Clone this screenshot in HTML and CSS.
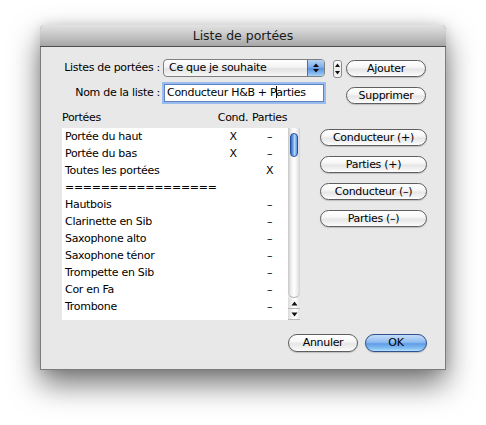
FILE: index.html
```html
<!DOCTYPE html>
<html lang="fr">
<head>
<meta charset="utf-8">
<title>Liste de portées</title>
<link rel="stylesheet" href="styles.css">
</head>
<body>
<div class="stage">
  <div class="window">
    <div class="titlebar">Liste de portées</div>
    <div class="top">
      <label class="lbl">Listes de portées :</label>
      <div class="popup">
        <span class="popup-text">Ce que je souhaite</span>
        <span class="popup-arrows">
          <svg width="8" height="12" viewBox="0 0 8 12"><polygon points="1,5 4,1.5 7,5" fill="#111"/><polygon points="1,7 4,10.5 7,7" fill="#111"/></svg>
        </span>
      </div>
      <div class="stepper">
        <svg width="7" height="16" viewBox="0 0 7 16"><polygon points="1,6 3.5,2.5 6,6" fill="#111"/><polygon points="1,10 3.5,13.5 6,10" fill="#111"/></svg>
      </div>
      <button class="btn btn-add">Ajouter</button>
      <label class="lbl">Nom de la liste :</label>
      <div class="field">Conducteur H&amp;B + P<span class="caret"></span>arties</div>
      <div class="spacer"></div>
      <button class="btn btn-del">Supprimer</button>
    </div>
    <div class="main">
      <div class="list-head"><span>Portées</span><span class="c">Cond.</span><span class="c">Parties</span></div>
      <div class="side-gap"></div>
      <div class="list-wrap">
        <div class="list">
          <div class="row"><span>Portée du haut</span><span class="c">X</span><span class="c">–</span></div>
          <div class="row"><span>Portée du bas</span><span class="c">X</span><span class="c">–</span></div>
          <div class="row"><span>Toutes les portées</span><span class="c"></span><span class="c">X</span></div>
          <div class="row"><span>=================</span><span class="c"></span><span class="c"></span></div>
          <div class="row"><span>Hautbois</span><span class="c"></span><span class="c">–</span></div>
          <div class="row"><span>Clarinette en Sib</span><span class="c"></span><span class="c">–</span></div>
          <div class="row"><span>Saxophone alto</span><span class="c"></span><span class="c">–</span></div>
          <div class="row"><span>Saxophone ténor</span><span class="c"></span><span class="c">–</span></div>
          <div class="row"><span>Trompette en Sib</span><span class="c"></span><span class="c">–</span></div>
          <div class="row"><span>Cor en Fa</span><span class="c"></span><span class="c">–</span></div>
          <div class="row"><span>Trombone</span><span class="c"></span><span class="c">–</span></div>
        </div>
        <div class="scrollbar">
          <div class="track"><div class="thumb"></div></div>
          <div class="arrow arrow-up"><svg width="7" height="5" viewBox="0 0 7 5"><polygon points="0.5,4.5 3.5,0.5 6.5,4.5" fill="#111"/></svg></div>
          <div class="arrow arrow-down"><svg width="7" height="5" viewBox="0 0 7 5"><polygon points="0.5,0.5 3.5,4.5 6.5,0.5" fill="#111"/></svg></div>
        </div>
      </div>
      <div class="side-buttons">
        <button class="btn btn-side">Conducteur (+)</button>
        <button class="btn btn-side">Parties (+)</button>
        <button class="btn btn-side">Conducteur (–)</button>
        <button class="btn btn-side">Parties (–)</button>
      </div>
    </div>
    <div class="footer">
      <button class="btn btn-cancel">Annuler</button>
      <button class="btn btn-ok">OK</button>
    </div>
  </div>
</div>
</body>
</html>
```

FILE: styles.css
```css
html, body {
  margin: 0;
  padding: 0;
  background: #ffffff;
}
body {
  font-family: "DejaVu Sans", sans-serif;
  font-size: 11px;
  letter-spacing: -0.3px;
  color: #000;
}
.stage {
  box-sizing: border-box;
  width: 486px;
  height: 425px;
  padding: 25px 0 0 40px;
  overflow: hidden;
}
.window {
  width: 406px;
  height: 345px;
  box-sizing: border-box;
  background: #e8e8e8;
  border: 1px solid #7c7c7c;
  border-top: none;
  border-radius: 5px 5px 0 0;
  box-shadow: 0 14px 30px rgba(0, 0, 0, 0.55), 0 0 12px rgba(0, 0, 0, 0.12);
  display: flex;
  flex-direction: column;
}
.titlebar {
  height: 21px;
  margin: 0 -1px;
  background: linear-gradient(#e2e2e2, #c6c6c6 50%, #a6a6a6);
  border-bottom: 1px solid #4e4e4e;
  border-radius: 5px 5px 0 0;
  text-align: center;
  line-height: 22px;
  font-size: 12.5px;
  letter-spacing: 0;
  color: #1a1a1a;
}
/* top form */
.top {
  margin-top: 12px;
  display: grid;
  grid-template-columns: 122px 162px 17px 84px;
  grid-template-rows: 18px 20px;
  row-gap: 7px;
}
.lbl {
  text-align: right;
  padding-right: 3px;
  line-height: 18px;
  white-space: nowrap;
}
.popup {
  display: flex;
  box-sizing: border-box;
  height: 18px;
  border: 1px solid #7f7f7f;
  border-radius: 4px;
  background: linear-gradient(#ffffff, #f3f3f3 45%, #e2e2e2 55%, #f6f6f6);
  overflow: hidden;
}
.popup-text {
  flex: 1;
  padding-left: 5px;
  line-height: 16px;
  white-space: nowrap;
}
.popup-arrows {
  width: 16px;
  display: flex;
  align-items: center;
  justify-content: center;
  border-left: 1px solid #4d6fa8;
  background: linear-gradient(#b7d3f5, #7eaee9 45%, #5b93e0 55%, #8fc2f4 90%, #aad7fb);
}
.stepper {
  justify-self: end;
  width: 9px;
  height: 18px;
  box-sizing: border-box;
  border: 1px solid #8a8a8a;
  border-radius: 3px;
  background: linear-gradient(#ffffff, #ececec 50%, #f7f7f7);
  display: flex;
  align-items: center;
  justify-content: center;
  margin-top: 1px;
}
.field {
  box-sizing: border-box;
  height: 18px;
  margin: 0 1px;
  border: 1px solid #5d82c2;
  box-shadow: 0 0 0 2px #9bbcee;
  background: #fff;
  padding-left: 2px;
  line-height: 16px;
  white-space: nowrap;
}
.caret {
  display: inline-block;
  width: 1px;
  height: 12px;
  margin: 0 -1px 0 0;
  background: #000;
  vertical-align: -2px;
}
/* buttons */
.btn {
  font: inherit;
  letter-spacing: inherit;
  color: #000;
  box-sizing: border-box;
  height: 17px;
  padding: 0;
  border: 1px solid #5e5e5e;
  border-radius: 9px;
  background: linear-gradient(#ffffff, #f7f7f7 40%, #e6e6e6 55%, #f4f4f4 85%, #ffffff);
  box-shadow: 0 1px 1px rgba(0, 0, 0, 0.18);
  line-height: 15px;
  text-align: center;
  white-space: nowrap;
}
.btn-add {
  justify-self: end;
  width: 80px;
  margin-top: 1px;
}
.btn-del {
  justify-self: end;
  align-self: start;
  width: 80px;
  margin-top: 3px;
}
/* main area */
.main {
  margin-top: 7px;
  padding-left: 21px;
  display: grid;
  grid-template-columns: 238px 107px;
  grid-template-rows: 14px auto;
  column-gap: 20px;
  row-gap: 3px;
}
.list-head {
  display: grid;
  grid-template-columns: 153px 36px 37px;
  line-height: 14px;
  white-space: nowrap;
}
.c {
  text-align: center;
}
.list-wrap {
  display: flex;
  height: 192px;
}
.list {
  width: 226px;
  background: #ffffff;
  padding-bottom: 5px;
}
.row {
  display: grid;
  grid-template-columns: 150px 36px 37px;
  padding-left: 3px;
  height: 17px;
  line-height: 17px;
  white-space: nowrap;
}
.scrollbar {
  width: 12px;
  display: flex;
  flex-direction: column;
}
.track {
  flex: 1;
  position: relative;
  background: linear-gradient(90deg, #c6c6c6, #ededed 25%, #ffffff 50%, #efefef 75%, #d2d2d2);
  border-bottom: 1px solid #b5b5b5;
  border-radius: 0 0 6px 6px;
}
.thumb {
  position: absolute;
  left: 2px;
  top: 5px;
  width: 8px;
  height: 24px;
  box-sizing: border-box;
  border: 1px solid #244f9a;
  border-radius: 4px;
  background: linear-gradient(90deg, #3568c4, #86b6f2 45%, #b9dcff 55%, #5d93e0);
}
.arrow {
  height: 11px;
  display: flex;
  align-items: center;
  justify-content: center;
  background: linear-gradient(90deg, #dadada, #f6f6f6 40%, #ffffff 60%, #e2e2e2);
  border-bottom: 1px solid #b8b8b8;
  box-sizing: border-box;
}
.side-buttons {
  display: flex;
  flex-direction: column;
  gap: 10px;
  padding-top: 1px;
}
.btn-side {
  width: 107px;
}
/* footer */
.footer {
  margin-top: auto;
  display: flex;
  justify-content: flex-end;
  gap: 7px;
  padding: 0 18px 17px 0;
}
.btn-cancel {
  width: 70px;
  height: 18px;
  line-height: 16px;
}
.btn-ok {
  width: 62px;
  height: 18px;
  line-height: 16px;
  border-color: #2f4f8e;
  background: linear-gradient(#c4dcf8, #8fbcef 45%, #5f9ce6 55%, #86c1f4 85%, #b8e3ff);
}
```
